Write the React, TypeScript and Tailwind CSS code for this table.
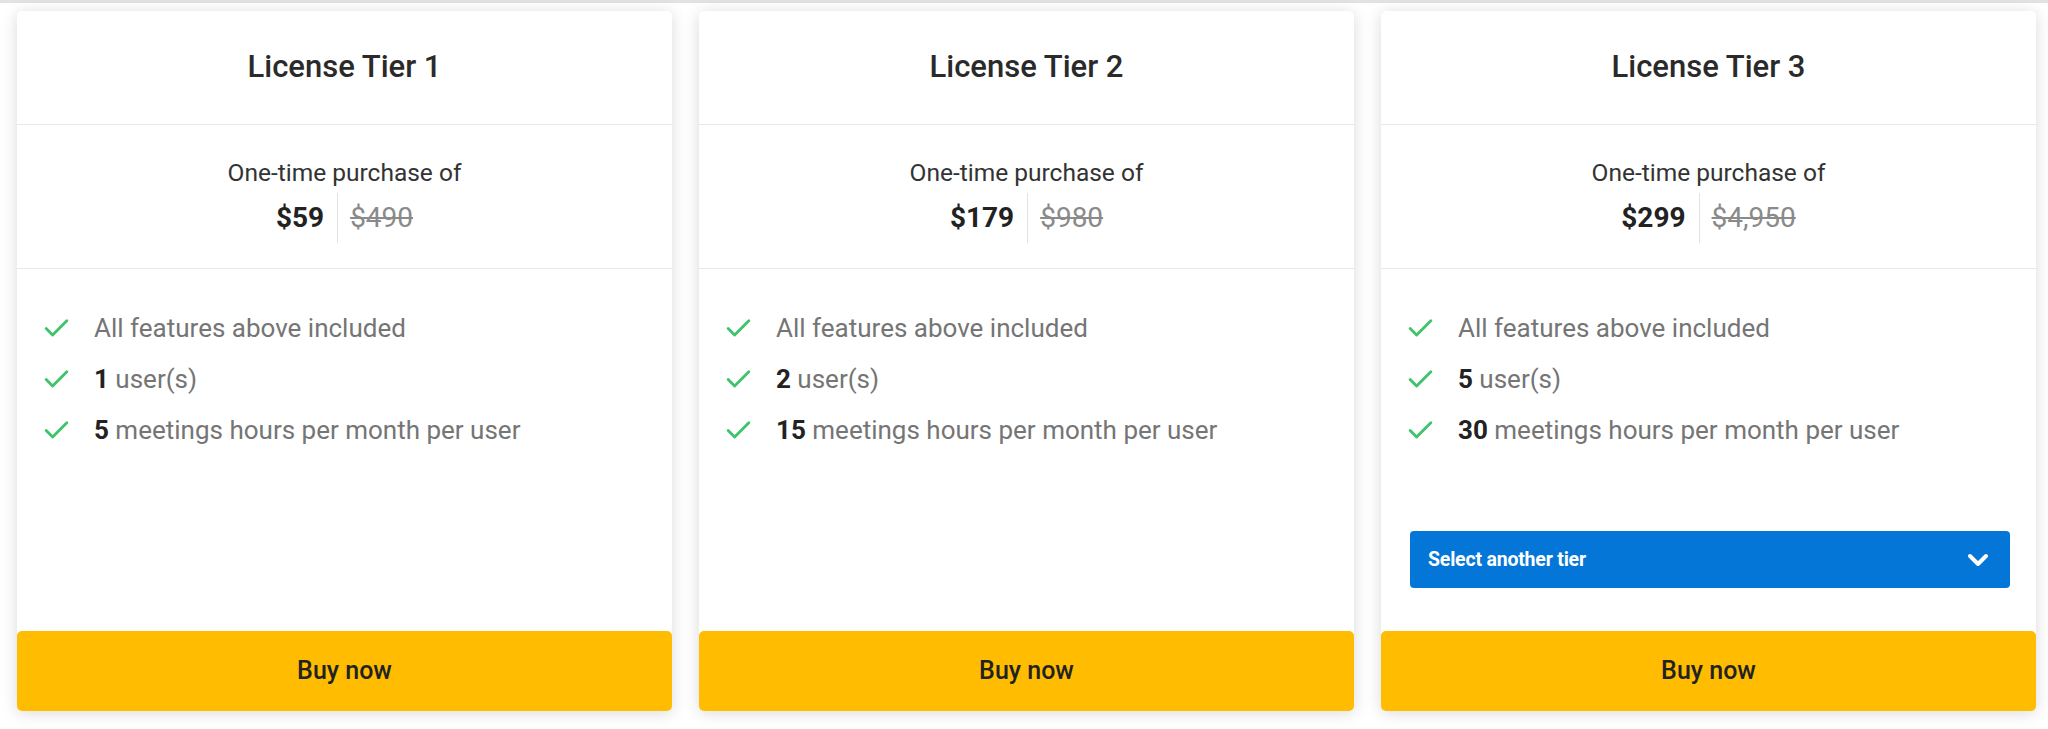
import { Check, ChevronDown } from 'lucide-react';

interface Tier { name: string; price: string; was: string; users: number; hours: number; select?: boolean }

const TIERS: Tier[] = [
  { name: 'License Tier 1', price: '$59', was: '$490', users: 1, hours: 5 },
  { name: 'License Tier 2', price: '$179', was: '$980', users: 2, hours: 15 },
  { name: 'License Tier 3', price: '$299', was: '$4,950', users: 5, hours: 30, select: true },
];

export default function App() {
  return (
    <div className="min-h-[729px] bg-white border-t-[3px] border-[#e2e2e2] font-['Roboto',sans-serif]">
      <div className="grid grid-cols-[655px_655px_655px] gap-[27px] pl-[17px] pt-[8px]">
        {TIERS.map((t) => (
          <TierCard key={t.name} t={t} />
        ))}
      </div>
    </div>
  );
}

function TierCard({ t }: { t: Tier }) {
  return (
    <div className="flex flex-col h-[700px] bg-white rounded-[5px] shadow-[0_2px_16px_rgba(0,0,0,0.15)]">
      {/* header */}
      <div className="h-[114px] flex items-center justify-center border-b border-[#e8e8e8]">
        <h2 className="text-[31px] font-medium text-[#2a2a2a]">{t.name}</h2>
      </div>

      {/* price */}
      <div className="h-[144px] flex flex-col items-center pt-[34px] border-b border-[#e8e8e8]">
        <p className="text-[24.5px] leading-[28px] text-[#333]">One-time purchase of</p>
        <div className="flex items-center mt-[6px]">
          <span className="text-[28px] font-bold text-[#222] pr-[13px]">{t.price}</span>
          <span className="w-px h-[50px] bg-[#e2e2e2]" />
          <span className="text-[28px] text-[#8a8a8a] line-through pl-[12px]">{t.was}</span>
        </div>
      </div>

      {/* features */}
      <div className="flex-1 flex flex-col pt-[41px]">
        <ul className="flex flex-col gap-[15px] pl-[24px]">
          <Feature>All features above included</Feature>
          <Feature><b className="font-bold text-[#222]">{t.users}</b> user(s)</Feature>
          <Feature><b className="font-bold text-[#222]">{t.hours}</b> meetings hours per month per user</Feature>
        </ul>
        {t.select && (
          <button className="mt-[83px] ml-[29px] mr-[26px] h-[57px] rounded-[4px] bg-[#0376d8] flex items-center justify-between pl-[18px] pr-[16px] text-white text-[19.5px] font-bold tracking-[-0.2px]">
            Select another tier
            <ChevronDown size={32} strokeWidth={3} />
          </button>
        )}
      </div>

      <button className="h-[80px] rounded-[5px] bg-[#ffbc00] text-[25px] font-medium text-[#222]">Buy now</button>
    </div>
  );
}

function Feature({ children }: { children: React.ReactNode }) {
  return (
    <li className="flex items-center h-[36px]">
      <Check size={31} strokeWidth={2.2} className="text-[#3fc36b] shrink-0" />
      <span className="ml-[22px] text-[26px] text-[#757575]">{children}</span>
    </li>
  );
}
